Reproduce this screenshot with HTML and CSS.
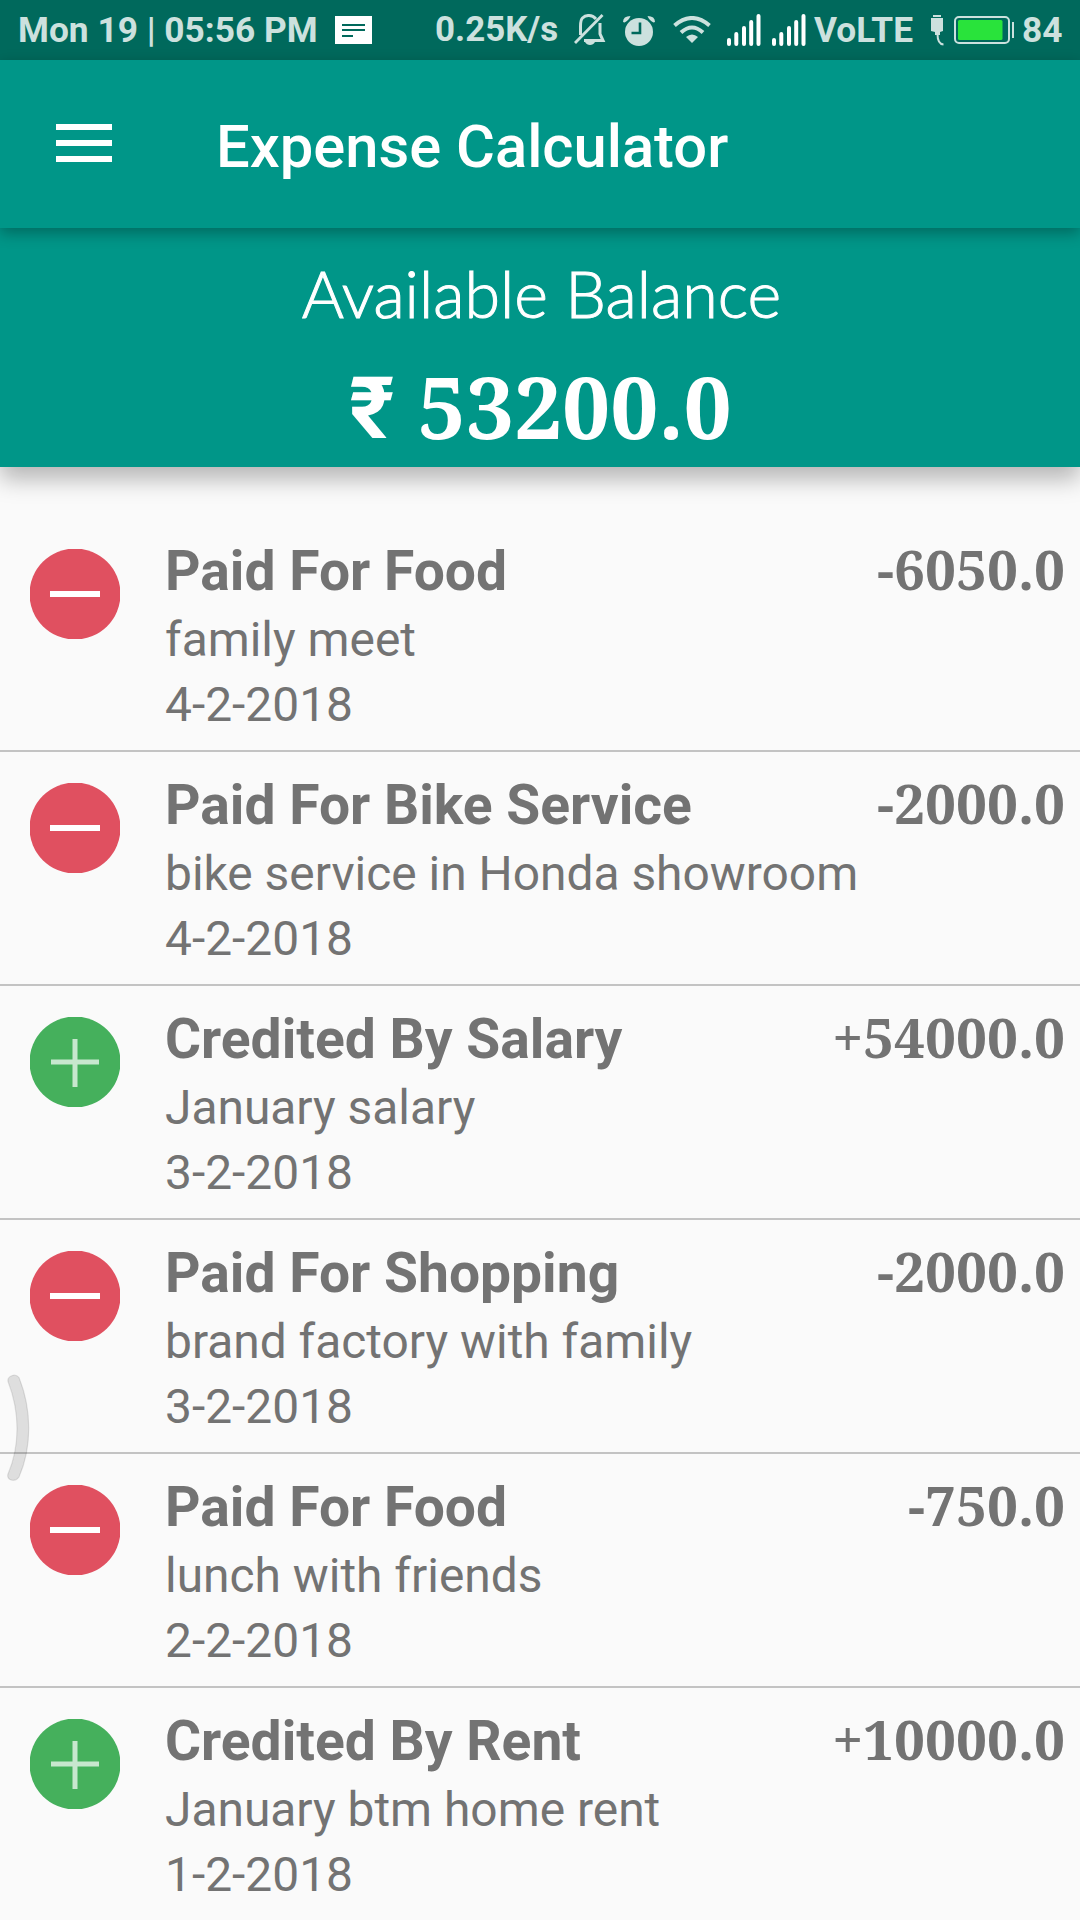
FILE: index.html
```html
<!DOCTYPE html>
<html lang="en">
<head>
<meta charset="utf-8">
<title>Expense Calculator</title>
<link rel="stylesheet" href="styles.css">
</head>
<body>
<div class="status">
  <span class="clock">Mon 19 | 05:56 PM</span>
  <svg class="ic-msg" width="37" height="28" viewBox="0 0 37 28"><path fill="#fff" d="M0 0h37v28H0z"/><path stroke="#00695c" stroke-width="2" d="M7 9h23M7 14h23M7 20h11"/></svg>
  <span class="speed">0.25K/s</span>
  <svg class="ic-bell" width="32" height="32" viewBox="0 0 32 32" fill="none" stroke="#cce1de" stroke-width="3"><path d="M22 5C18 .5 12 .5 8.500 4 6.500 6 6.500 9 6.500 12v9M26 9v11l3 6.500H10"/><path stroke-width="2.800" d="M1 29L28.500 1"/><path fill="#cce1de" stroke="none" d="M11 28h10c-2 4-8 4-10 0z"/></svg>
  <svg class="ic-alarm" width="32" height="31" viewBox="0 0 32 31"><path d="M0 7Q0 1 7.500 1 6 5 1.500 7.500zM32 7Q32 1 24.500 1 26 5 30.500 7.500z" fill="#cce1de"/><circle cx="16" cy="17" r="14" fill="#cce1de"/><path d="M17 7.500v10.500H8.500" fill="none" stroke="#00695c" stroke-width="2.600"/></svg>
  <svg class="ic-wifi" width="38" height="28" viewBox="0 0 38 28" fill="none" stroke="#cce1de" stroke-width="4"><path d="M1.500 9.500Q19-5.500 36.500 9.500M8 16.500Q19 6.500 30 16.500"/><path fill="#cce1de" stroke="none" d="M13 21q6-5 12 0l-6 6z"/></svg>
  <svg class="ic-sig" width="34" height="32" viewBox="0 0 34 32"><path d="M2 26v4M9.300 20v10M17 14v16M24.200 8v22M31.500 2v28" stroke="#fff" stroke-width="4" stroke-linecap="round"/></svg>
  <svg class="ic-sig ic-sig2" width="34" height="32" viewBox="0 0 34 32"><path d="M2 26v4M9.300 20v10M17 14v16M24.200 8v22M31.500 2v28" stroke="#fff" stroke-width="4" stroke-linecap="round"/></svg>
  <span class="volte">VoLTE</span>
  <svg class="ic-plug" width="15" height="31" viewBox="0 0 15 31"><path fill="#cce1de" d="M3 0h8v2H3zM1 3h12v13l-3 1v3H5v-3l-4-1z"/><path d="M7.500 19q0 10 6 10.500" fill="none" stroke="#cce1de" stroke-width="2"/></svg>
  <svg class="ic-bat" width="60" height="28" viewBox="0 0 60 28"><rect x="1" y="1" width="54" height="26" rx="4" fill="none" stroke="#cce1de" stroke-width="2"/><rect x="4" y="4" width="44.500" height="20" rx="1.500" fill="#29e33b"/><path fill="#cce1de" d="M58 6h2v16h-2z"/></svg>
  <span class="pct">84</span>
</div>
<header class="appbar">
  <svg class="menu" width="56" height="38" viewBox="0 0 56 38"><path fill="#fff" d="M0 0h56v6H0zM0 16h56v6H0zM0 32h56v6H0z"/></svg>
  <h1 class="title">Expense Calculator</h1>
</header>
<section class="balance">
  <div class="label">Available Balance</div>
  <div class="total"><span class="rupee">₹</span><span class="sum">53200.0</span></div>
</section>
<main class="list">
  <article class="row">
    <svg class="badge" viewBox="0 0 90 90"><circle class="out" cx="45" cy="45" r="45.500"/><path class="minus" d="M20 45h50"/></svg>
    <div class="info"><h2>Paid For Food</h2><p>family meet</p><p class="date">4-2-2018</p></div>
    <span class="amount">-6050.0</span>
  </article>
  <article class="row">
    <svg class="badge" viewBox="0 0 90 90"><circle class="out" cx="45" cy="45" r="45.500"/><path class="minus" d="M20 45h50"/></svg>
    <div class="info"><h2>Paid For Bike Service</h2><p>bike service in Honda showroom</p><p class="date">4-2-2018</p></div>
    <span class="amount">-2000.0</span>
  </article>
  <article class="row">
    <svg class="badge" viewBox="0 0 90 90"><circle class="in" cx="45" cy="45" r="45.500"/><path class="plus" d="M21 45h48M45 22v48"/></svg>
    <div class="info"><h2>Credited By Salary</h2><p>January salary</p><p class="date">3-2-2018</p></div>
    <span class="amount">+54000.0</span>
  </article>
  <article class="row">
    <svg class="badge" viewBox="0 0 90 90"><circle class="out" cx="45" cy="45" r="45.500"/><path class="minus" d="M20 45h50"/></svg>
    <div class="info"><h2>Paid For Shopping</h2><p>brand factory with family</p><p class="date">3-2-2018</p></div>
    <span class="amount">-2000.0</span>
  </article>
  <article class="row">
    <svg class="badge" viewBox="0 0 90 90"><circle class="out" cx="45" cy="45" r="45.500"/><path class="minus" d="M20 45h50"/></svg>
    <div class="info"><h2>Paid For Food</h2><p>lunch with friends</p><p class="date">2-2-2018</p></div>
    <span class="amount">-750.0</span>
  </article>
  <article class="row">
    <svg class="badge" viewBox="0 0 90 90"><circle class="in" cx="45" cy="45" r="45.500"/><path class="plus" d="M21 45h48M45 22v48"/></svg>
    <div class="info"><h2>Credited By Rent</h2><p>January btm home rent</p><p class="date">1-2-2018</p></div>
    <span class="amount">+10000.0</span>
  </article>
</main>
<svg class="handle" width="24" height="110" viewBox="0 0 24 110"><path d="M1 7.500C0 2.500 8-1.500 12 3.500 25 36 25 73 12 103 8 109-1 106 1 100 13 72 13 38 1 7.500z" fill="#000" fill-opacity=".11" stroke="#000" stroke-opacity=".1" stroke-width="1.200"/></svg>
</body>
</html>
```
FILE: styles.css
```css
* { box-sizing: border-box; margin: 0; padding: 0; }
body {
  position: relative;
  width: 1080px;
  height: 1920px;
  overflow: hidden;
  background: #fafafa;
  color: #737373;
  font-family: Roboto, sans-serif;
}
svg { display: block; flex: none; }
.status {
  display: flex;
  align-items: flex-start;
  height: 60px;
  background: #00695c;
  color: #cce1de;
  font-size: 35.3px;
  line-height: 42px;
  font-weight: 700;
  white-space: nowrap;
}
.status span { flex: none; margin-top: 9px; }
.clock { width: 318px; padding-left: 18px; }
.ic-msg { margin: 16px 0 0 17px; }
.status .speed { width: 124px; margin-left: 63px; font-size: 34.9px; }
.ic-bell { margin: 14px 0 0 15px; }
.ic-alarm { margin: 15px 0 0 17px; }
.ic-wifi { margin: 16px 0 0 18px; }
.ic-sig { margin: 14px 0 0 16px; }
.ic-sig2 { margin-left: 11px; }
.volte { width: 100px; margin-left: 8px; }
.ic-plug { margin: 15px 0 0 16px; }
.ic-bat { margin: 16px 0 0 9px; }
.pct { margin-left: 8px; }
.appbar {
  position: relative;
  z-index: 2;
  display: flex;
  align-items: flex-start;
  height: 168px;
  padding: 64px 0 0 56px;
  background: #009688;
  box-shadow: 0 5px 14px rgba(0, 0, 0, .3);
}
.title {
  margin: -5px 0 0 104px;
  color: #fff;
  font-size: 59.7px;
  line-height: 56px;
  font-weight: 500;
  white-space: nowrap;
}
.balance {
  position: relative;
  height: 239px;
  padding-top: 27px;
  background: #009688;
  color: #fff;
  text-align: center;
  box-shadow: 0 12px 22px rgba(0, 0, 0, .28);
}
.label {
  padding-left: 3px;
  font-family: "Coming Soon", Lato, sans-serif;
  font-size: 64.5px;
  font-weight: 300;
  line-height: 76px;
  -webkit-text-stroke: 1px #fff;
}
.total {
  display: flex;
  justify-content: center;
  gap: 23px;
  margin-top: 25px;
  padding-left: 1px;
  font-size: 86px;
  font-weight: 700;
  line-height: 100px;
}
.rupee { padding-top: 3px; }
.sum {
  font-family: "Noto Serif", "Liberation Serif", serif;
  font-size: 85.3px;
}
.list { padding-top: 51px; }
.row {
  display: flex;
  align-items: flex-start;
  height: 234px;
  padding: 31px 15px 0 30px;
  border-bottom: 2px solid #c3c3c3;
}
.badge { width: 90px; height: 90px; }
.out { fill: #e05060; }
.in { fill: #45b05c; }
.minus { stroke: #fff; stroke-width: 6; }
.plus { stroke: #fff; stroke-opacity: .7; stroke-width: 5; }
.info { flex: 1; min-width: 0; padding-left: 45px; white-space: nowrap; }
h2 { font-size: 55.2px; line-height: 64px; margin-top: -10px; }
p { font-size: 47.9px; line-height: 64px; margin-top: 5px; }
.date { margin-top: 1px; }
.amount {
  flex: none;
  margin-top: -12px;
  font-family: "Noto Serif", "Liberation Serif", serif;
  font-size: 54.8px;
  font-weight: 700;
  line-height: 64px;
}
.handle { position: absolute; left: 7px; top: 1374px; }
```
